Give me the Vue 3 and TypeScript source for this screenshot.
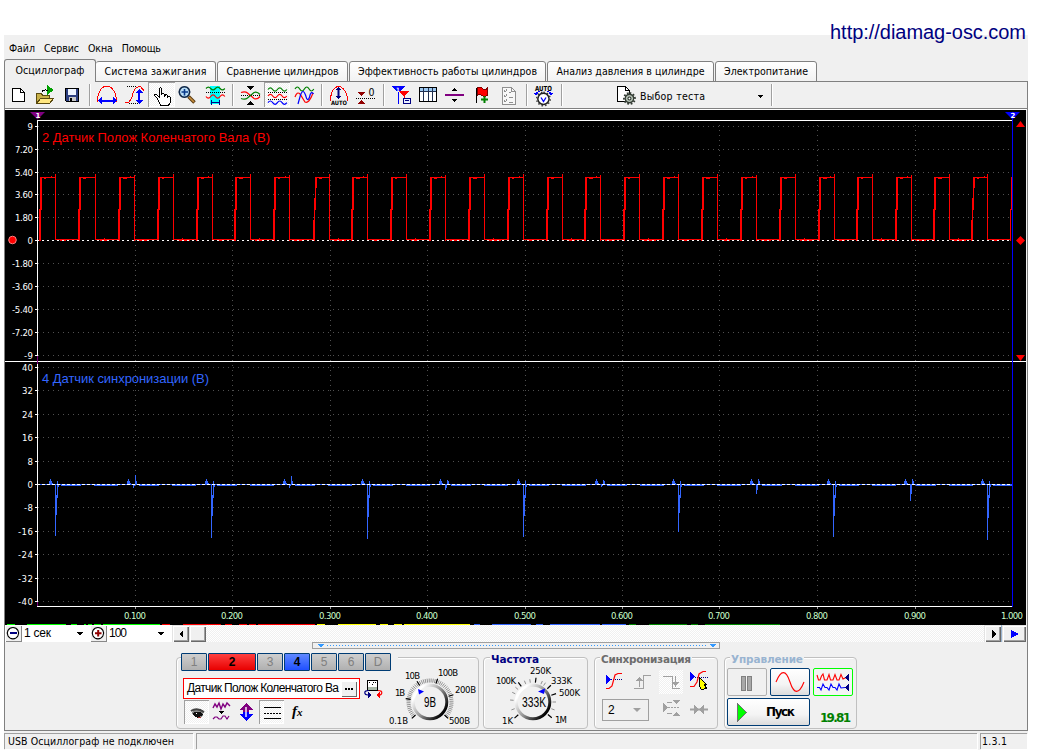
<script setup lang="ts">
import { h, type FunctionalComponent } from 'vue'

type PathShape = { d: string; s?: string; f?: string; w?: number; dash?: string }
type TextShape = { t: string; x: number; y: number; size: number; f?: string; bold?: boolean; len?: number }
type Shape = PathShape | TextShape
type Icon = { box: [number, number, number, number]; shapes: Shape[]; pressed?: boolean }

const p = (d: string, s = 'none', f = 'none', w = 1, dash = ''): PathShape => ({ d, s, f, w, dash })
const t = (text: string, x: number, y: number, size: number, f = '#000', bold = false, len?: number): TextShape =>
  ({ t: text, x, y, size, f, bold, len })

const Glyph: FunctionalComponent<{ icon: Icon }> = ({ icon }) =>
  h('svg', { viewBox: icon.box.join(' '), width: icon.box[2], height: icon.box[3], style: { display: 'block', flex: 'none' } },
    icon.shapes.map((s) => 't' in s
      ? h('text', {
          x: s.x, y: s.y, fill: s.f, 'font-size': s.size, 'font-weight': s.bold ? 700 : 400,
          'font-family': '"DejaVu Sans Condensed", "DejaVu Sans", sans-serif',
          textLength: s.len, lengthAdjust: 'spacingAndGlyphs',
        }, s.t)
      : h('path', {
          d: s.d, stroke: s.s, fill: s.f, 'stroke-width': s.w, 'stroke-dasharray': s.dash || undefined,
          'shape-rendering': s.w && s.w !== 1 ? 'auto' : 'crispEdges',
        })))
Glyph.props = ['icon']

// Spreads the letters so that the label takes the given width.
const vFit = {
  mounted(el: HTMLElement, binding: { value: number }) {
    const n = (el.textContent ?? '').length
    const natural = el.getBoundingClientRect().width
    if (n > 1) el.style.letterSpacing = `${(binding.value - natural) / (n - 1)}px`
  },
}

const wave = (x: number, y: number, half: number, n: number, amp: number, up = true) => {
  let d = `M${x} ${y}`
  for (let i = 0; i < n; i++) d += `q${half / 2} ${(i % 2 === 0) === up ? -amp * 2 : amp * 2} ${half} 0`
  return d
}

const menu = [
  { text: 'Файл', w: 26 },
  { text: 'Сервис', w: 35 },
  { text: 'Окна', w: 25 },
  { text: 'Помощь', w: 39 },
]

const tabs = [
  { text: 'Осциллограф', w: 92, fit: 69 },
  { text: 'Система зажигания', w: 120, fit: 102 },
  { text: 'Сравнение цилиндров', w: 131, fit: 112 },
  { text: 'Эффективность работы цилиндров', w: 197, fit: 179 },
  { text: 'Анализ давления в цилиндре', w: 167, fit: 148 },
  { text: 'Электропитание', w: 102, fit: 84 },
]

const R = '#f00', B = '#00f', G = '#008000', N = '#000080'
const T = (x: number, w: number, shapes: Shape[], pressed = false): Icon => ({ box: [x, 82, w, 26], shapes, pressed })
const sep = (x: number): Shape[] => [p(`M${x + 0.5} 84V106`, '#a0a0a0'), p(`M${x + 1.5} 84V106`, '#fff')]

const tools: Icon[] = [
  T(5, 25, [p('M12.5 88.5H20.5L24.5 92.5V101.5H12.5Z', '#000', '#fff'), p('M20.5 88.5V92.5H24.5', '#000')]),
  T(30, 30, [
    p('M36.5 103.5V93.5H41.5L42.5 95.5H49.5V98.5', '#5a4a10', '#c8b048'),
    p('M36.5 103.5L40.5 98.5H53.5L49.5 103.5Z', '#5a4a10', '#ffe680'),
    p('M47 85L54 90L47 95Z', 'none', '#00a000'), p('M42 91.5Q44 89 48 90.5', '#000'),
  ]),
  T(60, 24, [
    p('M65.5 88.5H78.5V101.5H66.5L65.5 100.5Z', '#000', '#2c3e80'), p('M68 89H76V95H68Z', 'none', '#eef4ff'),
    p('M69 97H76V101H69Z', 'none', '#c8c8c8'), p('M70 98H72V101H70Z', 'none', '#000'),
  ]),
  T(84, 10, sep(89)),
  T(94, 27, [
    p('M97.5 102V98.5C98.5 91 102 86.5 105.5 86.5H108.5C112 87 115.5 92 116.5 98.5V102', R),
    p('M98 100.5L102 96.5V104.5ZM117 100.5L113 96.5V104.5Z', 'none', B), p('M101 101H114', B, 'none', 2),
  ]),
  T(121, 27, [
    p('M124.5 102.5H128.5L131.5 98.5L133.5 91.5L135.5 88.5L138.5 86.5H140.5L144.5 91.5', R),
    p('M127 86.5H136M129 103.5H141', '#000', 'none', 1, '1 1'), p('M139 92V101', B, 'none', 2),
    p('M139 89L143 93H135ZM139 104L143 100H135Z', 'none', B),
  ]),
  T(148, 27, [
    p('M157.5 98.5L154.5 95.5V94.5H156.5L159.5 97.5V88.5Q160.5 86.5 161.5 88.5V94.5Q162.5 92.5 164.5 94.5V96.5Q165.5 93.5 167.5 95.5V97.5Q169.5 95.5 170.5 97.5V102.5L168.5 105H160.5Z', '#000', '#fff'),
  ], true),
  T(175, 27, [
    p('M188.5 96.5L194.5 102.5', '#5a3a10', 'none', 3.6), p('M189 97L194 102', '#c89040', 'none', 1.6),
    p('M184.5 86.8A5.2 5.2 0 1 1 184.4 86.8Z', '#102848', '#b8ddf6', 1.6),
    p('M184.5 89V95.5M181.5 92H188', '#0a3a8a', 'none', 1.6),
  ]),
  T(202, 27, [
    p('M210 86H220V104H210Z', 'none', '#0ff'), p(wave(206, 88.5, 4.7, 4, 1.4), G, 'none', 1.2),
    p('M206 92.5H225', '#000', 'none', 1, '1 1'), p(wave(206, 96.5, 4.7, 4, 1.7, false), R, 'none', 1.2),
    p('M212 102.5H219M211.5 100V105M219.5 100V105', N),
  ]),
  T(229, 10, sep(232)),
  T(239, 25, [
    p('M247 86H254L250.5 90ZM247 105H254L250.5 101Z', 'none', '#000'), p('M241 95.5H260', '#000', 'none', 1, '1 1'),
    p('M241 92.5Q245 91 247.5 93L254 98.5Q257 100 260 96.5', R, 'none', 1.2), p('M241 98.5Q245 100 247.5 98L254 92.5Q257 91 260 94.5', G, 'none', 1.2),
  ]),
  T(264, 26, [
    p(wave(268, 89.5, 4.7, 4, 1.7), G, 'none', 1.2), p('M268 92.5H287', '#000', 'none', 1, '1 1'),
    p(wave(268, 96, 4.7, 4, 1.7), R, 'none', 1.2),
    p('M268 99.5H287', '#000', 'none', 1, '1 1'), p(wave(268, 102.7, 4.7, 4, 1.7), B, 'none', 1.2),
  ], true),
  T(290, 28, [
    p(wave(295, 89, 4.7, 4, 2), G, 'none', 1.2), p('M295 97Q297 91 300 94L305 102Q309 104 313 93', R, 'none', 1.2),
    p('M298 104L300.5 95Q303 88 305.5 95Q307.5 103 309.5 97Q311 90 313.5 94', B, 'none', 1.2),
  ]),
  T(318, 9, sep(321)),
  T(327, 25, [
    p('M330.5 101V97.5Q332.5 86.5 338.5 86.5Q344.5 86.5 347.5 97.5V101', R), p('M338.5 89V97', N, 'none', 2),
    p('M338.5 86.5L341.5 90H335.5ZM338.5 99.5L341.5 96H335.5Z', 'none', N), t('AUTO', 331, 104.5, 6, '#000', true, 16),
  ]),
  T(352, 28, [
    p('M357 92H365L361 96ZM357 104H365L361 100Z', 'none', '#900000'), p('M356 98.5H375', '#000', 'none', 1, '1 1'),
    t('0', 368.5, 96, 10.5),
  ]),
  T(380, 10, sep(383)),
  T(390, 26, [
    p('M392 86H405L398.5 93Z', 'none', B), p('M398.5 92V104', B), p('M399 91H409L404 97Z', 'none', R), p('M404.5 95V100', R),
    t('1', 396, 91.5, 6, '#fff', true), p('M403.5 98.5H410.5V103.5H403.5Z', N, '#e8f0ff'), p('M405 101L407 100L409 101', N),
  ]),
  T(416, 26, [
    p('M419.5 87.5H436.5V101.5H419.5Z', '#000', '#fff'), p('M420 88H436V91.5H420Z', 'none', '#9cc8f0'),
    p('M420 91.5H436M423.5 88V101M428.5 88V101M432.5 88V101', '#203050'),
  ]),
  T(442, 28, [p('M445 95H464', '#800080', 'none', 2), p('M452 91H457L454.5 88ZM452 99H457L454.5 102Z', 'none', '#000', 0)]),
  T(470, 26, [
    p('M476.5 88V103', '#000'), p('M477 88Q480 86 482.5 88.5T487.5 88V95.5Q484.5 97 482 95.5T477 95.5Z', '#800000', R),
    p('M484.5 96V103M481 99.5H488', G, 'none', 2),
  ]),
  T(496, 26, [
    p('M502.5 87.5H511.5L515.5 91.5V104.5H502.5Z', '#909090', '#f8f8f8'), p('M511.5 88V91.5H515', '#909090'),
    p('M504 90.5L505 92L507 89.5M504 95.5L505 97L507 94.5M504 100.5L505 102L507 99.5M509 92.5H511M509 97.5H513M509 102.5H513', '#909090'),
  ]),
  T(522, 9, sep(526)),
  T(531, 27, [
    t('AUTO', 535, 90.5, 7, '#000', true, 17), p('M536 95Q536 91.5 540 91.5M551 95Q551 91.5 547 91.5', B),
    p('M534 93H538L536 96ZM549 93H553L551 96Z', 'none', B), p('M543.5 93.2A5.6 5.6 0 1 1 543.4 93.2Z', '#222', '#fff', 1.5),
    p('M543.5 92.2A6.8 6.8 0 1 1 543.4 92.2Z', '#333', 'none', 1.4, '1.4 2.2'), p('M541 97.5L543.5 101.5L546 97.5', B, 'none', 1.3),
  ]),
  T(558, 50, sep(561)),
  T(608, 31, [
    p('M617.5 86.5H625.5L629.5 90.5V101.5H617.5Z', '#000', '#fff'), p('M625.5 87V90.5H629', '#000'),
    p('M629.5 94.2A4.3 4.3 0 1 1 629.4 94.2Z', '#343c34', '#b8c4b8', 1.4), p('M629.5 93A5.5 5.5 0 1 1 629.4 93Z', '#343c34', 'none', 1.8, '1.8 1.7'),
    p('M629.5 97A1.5 1.5 0 1 1 629.4 97Z', '#343c34', '#fff', 1.1),
  ]),
]
const testArrow: Icon = T(750, 26, [p('M757.5 95H763.5L760.5 98Z', 'none', '#000'), ...sep(771)])

// ---- oscillogram ----
const gridX = [135, 232, 330, 427, 525, 622, 719, 817, 915]
const upper = [
  { y: 126, v: '9' }, { y: 149, v: '7.20' }, { y: 172, v: '5.40' }, { y: 194, v: '3.60' }, { y: 217, v: '1.80' }, { y: 240, v: '0' },
  { y: 263, v: '-1.80' }, { y: 286, v: '-3.60' }, { y: 309, v: '-5.40' }, { y: 332, v: '-7.20' }, { y: 355, v: '-9' },
]
const lower = [
  { y: 367, v: '40' }, { y: 390, v: '32' }, { y: 414, v: '24' }, { y: 437, v: '16' }, { y: 461, v: '8' }, { y: 484, v: '0' },
  { y: 507, v: '-8' }, { y: 531, v: '-16' }, { y: 554, v: '-24' }, { y: 578, v: '-32' }, { y: 601, v: '-40' },
]
const rows = [...upper, ...lower]
const labelLen = (v: string) => ({ 1: 5, 2: v[0] === '-' ? 9 : 11, 3: 15, 4: 18, 5: 21 } as Record<number, number>)[v.length]
const times = [...gridX, 1012].map((x, i) => ({ x, v: i === 9 ? '1.000' : `0.${i + 1}00` }))

const rises = [40, 79, 119, 158, 197, 235, 274, 315, 352, 391, 430, 469, 508, 547, 585, 624, 663, 702, 741, 780, 819, 857, 896, 934, 973]
const box = (x: number, y: number, w: number, hgt: number) => `M${x} ${y}h${w}v${hgt}h${-w}z`
const crank = rises.map((x, i) => {
  const slow = x === 315 || x === 973
  const fall = x + (i === 1 ? 16 : slow ? 14 : 15)
  const next = rises[i + 1] ?? 1011
  const edge = slow
    ? box(x - 2, 220, 1, 21) + box(x - 1, 198, 1, 43) + box(x, 177, 1, 33) + box(x + 1, 177, 1, 11)
    : box(x - 1, 209, 2, 32) + box(x, 177, 2, 33)
  return edge + box(x, 177, fall - x, 1) + box(fall, i % 4 === 2 ? 175 : 174, 1, 66) + box(fall, 239, next - fall, 1)
    + box(x + 4, 178, 2 + (i % 3), 1) + box(fall + 5, 240, 6 + (i % 4) * 2, 1)
    + (i % 2 ? box(fall + 9, 238, 1, 1) : box(x + 11, 176, 1, 1))
}).join('') + box(1010, 209, 1, 32) + box(1011, 177, 1, 33)

const pulses = [
  { x: 55, lo: 536 }, { x: 133, lo: 488, hi: 475 }, { x: 211, lo: 538 }, { x: 289, lo: 488, hi: 476 }, { x: 367, lo: 539 },
  { x: 445, lo: 490, hi: 480 }, { x: 523, lo: 537 }, { x: 601, lo: 487, hi: 480 }, { x: 678, lo: 532 }, { x: 756, lo: 494, hi: 479 },
  { x: 833, lo: 537 }, { x: 910, lo: 501, hi: 479 }, { x: 987, lo: 540 },
]
const cam = box(38, 484, 974, 1) + pulses.map(({ x, lo, hi }) => {
  const span = lo - 484
  const mid = Math.round(span * 0.6)
  const blip = box(x - 6, 481, 1, 3) + box(x - 5, 479, 1, 5) + box(x - 4, 481, 1, 3) + box(x - 3, 483, 1, 1)
  const fall = box(x, 484, 1, span) + (hi
    ? box(x + 1, 484, 1, mid) + box(x + 2, hi, 1, 484 - hi) + box(x + 3, 481, 1, 3)
    : box(x + 1, 495, 1, mid - 11) + box(x + 2, 481, 1, 17) + box(x + 3, 484, 1, 3))
  return blip + fall + box(x + 6, 485, 20, 1) + box(x + 39, 485, x > 980 ? 0 : 24, 1)
}).join('')

const strip = [
  ['#0f0', 7, 15], ['#0f0', 27, 66], ['#0f0', 71, 77], ['#0f0', 84, 86], ['#0f0', 88, 92], ['#0f0', 94, 101], ['#0f0', 103, 160],
  ['#f00', 162, 170], ['#f00', 183, 221], ['#f00', 225, 232], ['#f00', 239, 247], ['#f00', 249, 256], ['#f00', 258, 315],
  ['#ff0', 317, 325], ['#ff0', 338, 376], ['#ff0', 380, 388], ['#ff0', 394, 402], ['#ff0', 404, 470],
  ['#36f', 474, 480], ['#36f', 492, 531], ['#36f', 536, 543], ['#36f', 550, 600], ['#36f', 602, 626],
  ['#080', 629, 636], ['#080', 649, 687], ['#080', 691, 698], ['#080', 705, 780],
] as [string, number, number][]

// ---- controls ----
const minus: Icon = { box: [5, 625, 17, 17], shapes: [p('M13 627.5A5.7 5.7 0 1 1 12.9 627.5Z', '#000', '#fff', 1.1), p('M10 633H17', N, 'none', 2)] }
const plus: Icon = { box: [90, 625, 17, 17], shapes: [p('M98 627.5A5.7 5.7 0 1 1 97.9 627.5Z', '#000', '#fff', 1.1), p('M95 633.2H101.5M98.2 630V636.5', '#900000', 'none', 2)] }
const caret: Icon = { box: [0, 0, 14, 16], shapes: [p('M3 7H10L6.5 10.5Z', 'none', '#000')] }
const arrowL: Icon = { box: [0, 0, 14, 14], shapes: [p('M9 3V11L5 7Z', 'none', '#000')] }
const arrowR: Icon = { box: [0, 0, 14, 14], shapes: [p('M6 3V11L10 7Z', 'none', '#000')] }
const play: Icon = { box: [0, 0, 20, 14], shapes: [p('M7 3V11L15 7Z', 'none', B, 0)] }
const splitter: Icon = {
  box: [313, 643, 405, 5],
  shapes: [p('M317 644H324L320.5 647.5ZM709 644H716L712.5 647.5Z', 'none', '#3399ff', 0), p('M327 645.5H707', '#3399ff', 'none', 1, '1 2')],
}

const channels = [
  { n: '1', c: '' }, { n: '2', c: 'red' }, { n: '3', c: '' }, { n: '4', c: 'blue' }, { n: '5', c: '' }, { n: '6', c: '' }, { n: 'D', c: '' },
]
const probe: Icon = {
  box: [360, 678, 24, 22],
  shapes: [
    p('M367.5 680.5H377.5V690.5H367.5Z', '#000', '#fff'), p('M368 687H377V690H368Z', 'none', '#a8b8a8'),
    p('M369 683L371 682M373 682L376 683M372.5 684V686', '#000', 'none', 1, '1 1'),
    p('M369 690.5Q364.5 690.5 364.8 693Q365 695 368 695', N, 'none', 1.2), p('M367.5 691.5V698.5L371 695Z', 'none', N),
    p('M378 690.5Q382 690.5 381.8 693Q381.6 695 379 695', R, 'none', 1.2), p('M379.5 691.5V698.5L376 695Z', 'none', R),
  ],
}
const eye: Icon = {
  box: [185, 701, 23, 22],
  shapes: [
    p('M191.5 713Q197 706 204 711L203 716Q198 719 194 716Z', 'none', '#888', 0), p('M191 711Q197 707 204 712', '#444', 'none', 2),
    p('M193 713Q198 710 203 714Q198 720 194 716Z', 'none', '#111', 0), p('M196 713H197V714H196Z', 'none', '#fff'), p('M198 717H201', '#b03030'),
  ],
}
const noise: Icon = {
  box: [209, 700, 26, 24],
  shapes: [
    p('M213 708L215 704L217 707L219 703L221 709L223 704L225 707L227 703L230 706', '#800080', 'none', 1.4),
    p('M218 711H224L221 714Z', 'none', '#000'), p('M213 719L215 717H217L219 719H221L223 716H225L227 719L229 716', '#800080', 'none', 1.2),
  ],
}
const updown: Icon = {
  box: [235, 700, 24, 24],
  shapes: [
    p('M246 703L253 710H248.7V712H243.3V710H239Z', 'none', '#800080', 0), p('M246 721L253 714H248.7V712H243.3V714H239Z', 'none', B, 0),
    p('M246 707V717', '#fff', 'none', 1.4),
  ],
}
const lines: Icon = { box: [260, 701, 23, 22], shapes: [p('M264 707.5H281M264 718.5H281', '#000'), p('M264 713.5H281', '#000', 'none', 1, '2 1')] }

type Mark = { text: string; x: number; y: number; len: number }
const dial = (cx: number, major: number[], minor: number[], marks: Mark[], outer: number) => {
  const line = (a: number, r1: number, r2: number) => {
    const c = Math.cos((a * Math.PI) / 180), s = Math.sin((a * Math.PI) / 180)
    return `M${(cx + c * r1).toFixed(1)} ${(702 + s * r1).toFixed(1)}L${(cx + c * r2).toFixed(1)} ${(702 + s * r2).toFixed(1)}`
  }
  return { major: major.map((a) => line(a, 19.5, 24.5)).join(''), minor: minor.map((a) => line(a, 19.5, outer)).join(''), marks }
}
const volt = dial(430, [138, 188, 238, 288, 343, 42], Array.from({ length: 54 }, (_, i) => 138 + i * 5), [
  { text: '0.1В', x: 389, y: 724, len: 19 }, { text: '1В', x: 395, y: 696, len: 10 }, { text: '10В', x: 405, y: 679, len: 15 },
  { text: '100В', x: 438, y: 676, len: 20 }, { text: '200В', x: 455, y: 693, len: 21 }, { text: '500В', x: 449, y: 724, len: 21 },
], 23.5)
const freq = dial(533, [139, 233, 277, 317, 340, 40], [160, 185, 205, 220, 248, 262, 294, 303, 0, 20], [
  { text: '100K', x: 496, y: 684, len: 20 }, { text: '250K', x: 530, y: 674, len: 21 }, { text: '333K', x: 551, y: 684, len: 21 },
  { text: '500K', x: 559, y: 696, len: 21 }, { text: '1M', x: 555, y: 723, len: 12 }, { text: '1K', x: 502, y: 724, len: 11 },
], 23)

const gr = '#a0a0a0'
const syncTop: Icon[] = [
  { box: [600, 670, 30, 24], shapes: [p('M606 675V684L611 679.5Z', 'none', B), p('M611 679.5H622', N, 'none', 1, '1 1'), p('M606 688.5H609L612 686L615 675L618 673.5H622', R, 'none', 1.2)] },
  { box: [630, 670, 29, 24], shapes: [p('M634 688.5H643.5V675.5H651', gr), p('M639.5 677V687', gr), p('M636 681H643L639.5 677Z', 'none', gr)] },
  { box: [659, 670, 24, 24], pressed: true, shapes: [p('M663 676.5H672.5V688.5H680', gr), p('M675.5 676V687', gr), p('M672 682H679L675.5 686Z', 'none', gr)] },
  { box: [683, 670, 32, 24], shapes: [
    p('M690 672V681L695 676.5Z', 'none', B), p('M695 677.5H708', N, 'none', 1, '1 1'), p('M690 686.5H694L697 682L699 674L703 671.5H706', R, 'none', 1.2),
    p('M699.5 677.5L706.5 684.5H704.5L706.5 688.5L701.5 689.5L699.5 686.5Z', '#000', '#ff0') ] },
]
const syncBottom: Icon[] = [
  { box: [655, 697, 30, 26], shapes: [p('M663 703V712L668 707.5Z', 'none', gr), p('M668 707.5H680', gr, 'none', 1, '2 1'), p('M672 700H680L676 704ZM672 716H680L676 712Z', 'none', gr), p('M667 702.5H672M667 713.5H672', gr)] },
  { box: [685, 697, 30, 26], shapes: [p('M690 709.5H708', gr, 'none', 2), p('M694 704.5V714.5L698.8 709.5ZM704 704.5V714.5L699.2 709.5Z', 'none', gr, 0)] },
]
const pause: Icon = { box: [728, 669, 38, 26], shapes: [p('M741.5 676.5H745.5V690.5H741.5ZM747.5 676.5H751.5V690.5H747.5Z', '#808080', '#a8a8a8')] }
const sine: Icon = { box: [771, 669, 38, 26], shapes: [p('M776 682C781 669.5 786 669.5 790 682S799 694.5 804 682', R, 'none', 1.1)] }
const multi: Icon = { box: [814, 669, 38, 26], shapes: [
  p('M817 675L818.5 680L820 680L821.5 676L823 674L824.5 680H827L829 674.5L830.5 680H833L835 674.5L837 680H839L841 674.5L843 679L846 677.5', R, 'none', 1.1),
  p('M817 687.5H819.5L821 690L823 684L825 687.5H827L829 690L831 684L833 687.5H835L837 690L839 684L841 688L845 687.5', B, 'none', 1.1),
  p('M849 674V681L845 677.5ZM849 684V691L845 687.5Z', 'none', N)] }
const go: Icon = { box: [728, 699, 36, 26], shapes: [p('M737.5 703.5V721.5L746.5 712.5Z', '#707070', '#0f0')] }
</script>

<template>
  <div class="screen">
    <header class="banner"><span v-fit="196" class="url">http://diamag-osc.com</span></header>
    <main class="window">
      <nav class="menu">
        <span v-for="m in menu" :key="m.text"><span v-fit="m.w">{{ m.text }}</span></span>
      </nav>
      <div class="tabs">
        <div v-for="(tab, i) in tabs" :key="tab.text" class="tab" :class="[`tab-${i}`, { active: i === 0 }]" :style="{ width: tab.w + 'px' }">
          <span v-fit="tab.fit">{{ tab.text }}</span>
        </div>
      </div>
      <section class="page">
        <div class="toolbar">
          <div v-for="icon in tools" :key="icon.box[0]" class="tool" :class="{ pressed: icon.pressed }"><Glyph :icon="icon" /></div>
          <div class="test"><span v-fit="65">Выбор теста</span></div>
          <Glyph :icon="testArrow" />
        </div>

        <svg class="scope" viewBox="5 110 1021 515" width="1021" height="515">
          <rect x="5" y="110" width="1021" height="515" fill="#000" />
          <g stroke="#505050" stroke-dasharray="1 4">
            <path v-for="r in rows" :key="r.y" :d="`M38 ${r.y + 0.5}H1011`" />
            <path v-for="x in gridX" :key="x" :d="`M${x + 0.5} 125V605`" />
          </g>
          <path d="M37 120.5H1012M37.5 120V607M37 606.5H1012M5 361.5H1026" stroke="#fff" />
          <path v-for="r in rows" :key="r.y" :d="`M35 ${r.y + 0.5}H38`" stroke="#fff" />
          <path v-for="x in gridX" :key="x" :d="`M${x + 0.5} 607V609`" stroke="#999" />
          <path d="M37.5 356V364M37.5 602V606" stroke="#800080" />
          <text v-for="r in rows" :key="r.y" class="axis" :x="33" :y="r.y + 3.5" text-anchor="end" :textLength="labelLen(r.v)">{{ r.v }}</text>
          <text v-for="tm in times" :key="tm.x" class="axis time" :x="tm.x" y="619" text-anchor="middle" textLength="22">{{ tm.v }}</text>
          <path :d="crank" fill="#f00" />
          <path :d="cam" fill="#3366ff" />
          <path d="M37 240.5H1012" stroke="#fff" stroke-dasharray="2 3" />
          <path d="M37 484.5H1012" stroke="#fff" stroke-dasharray="3 2" />
          <text class="trace" x="42" y="142" fill="#f00" textLength="228">2 Датчик Полож Коленчатого Вала (В)</text>
          <text class="trace" x="42" y="383" fill="#3366ff" textLength="167">4 Датчик синхронизации (В)</text>
          <path d="M1012.5 118V607" stroke="#00f" />
          <path d="M30 112H45L37.5 119.5Z" fill="#800080" />
          <path d="M1005 112H1020L1012.5 119.5Z" fill="#00f" />
          <text class="flag" x="35.5" y="118">1</text>
          <text class="flag" x="1010.5" y="118">2</text>
          <path d="M1016 127H1025L1020.5 121ZM1016 355H1025L1020.5 361ZM1020.5 236L1025 240.5L1020.5 245L1016 240.5Z" fill="#f00" />
          <circle cx="12.5" cy="240" r="3.8" fill="#f00" stroke="#ff8080" />
          <path v-for="s in strip" :key="s[1]" :d="`M${s[1]} 624.5H${s[2]}`" :stroke="s[0]" />
        </svg>

        <div class="scroll-row">
          <div class="raised"><Glyph :icon="minus" /></div>
          <div class="combo first"><span v-fit="27">1 сек</span><Glyph :icon="caret" /></div>
          <div class="raised"><Glyph :icon="plus" /></div>
          <div class="combo second"><span v-fit="18">100</span><Glyph :icon="caret" /></div>
          <div class="raised bevel"><Glyph :icon="arrowL" /></div>
          <div class="raised bevel"></div>
          <div class="track"></div>
          <div class="raised bevel"><Glyph :icon="arrowR" /></div>
          <div class="sliver"></div>
          <div class="raised bevel run"><Glyph :icon="play" /></div>
        </div>

        <div class="splitter"><Glyph :icon="splitter" /></div>

        <div class="panels">
          <div class="group g1">
            <div class="channel">
              <div class="channel-tabs">
                <div v-for="c in channels" :key="c.n" class="ch" :class="c.c">{{ c.n }}</div>
              </div>
              <div class="name-row">
                <div class="name"><div class="name-text"><span v-fit="152">Датчик Полож Коленчатого Ва</span></div><div class="more"><i></i><i></i><i></i></div></div>
                <Glyph :icon="probe" />
              </div>
              <div class="modes">
                <div class="pressed mode"><Glyph :icon="eye" /></div>
                <Glyph :icon="noise" />
                <Glyph :icon="updown" />
                <div class="pressed mode"><Glyph :icon="lines" /></div>
                <span class="fx">f<small>x</small></span>
              </div>
            </div>
            <svg class="dial" viewBox="388 658 90 70" width="90" height="70">
              <defs>
                <linearGradient id="rim" x1="0" y1="0.1" x2="1" y2="0.9">
                  <stop offset="0.15" stop-color="#fff" /><stop offset="0.5" stop-color="#999" /><stop offset="0.9" stop-color="#000" />
                </linearGradient>
              </defs>
              <path :d="volt.minor" stroke="#909090" />
              <path :d="volt.major" stroke="#000" stroke-width="1.2" />
              <circle cx="430" cy="702" r="16.8" fill="#f0f0f0" stroke="url(#rim)" stroke-width="3" />
              <path d="M418 689L424 691.5L419 694.5Z" fill="#00f" />
              <text v-for="m in volt.marks" :key="m.text" class="mark" :x="m.x" :y="m.y" :textLength="m.len">{{ m.text }}</text>
              <text class="value" x="424" y="707" textLength="12" lengthAdjust="spacingAndGlyphs">9В</text>
            </svg>
          </div>

          <div class="group g2">
            <span class="legend navy"><span v-fit="48">Частота</span></span>
            <svg class="dial" viewBox="484 658 103 70" width="103" height="70">
              <path :d="freq.minor" stroke="#909090" />
              <path :d="freq.major" stroke="#000" stroke-width="1.2" />
              <circle cx="533" cy="702" r="16.8" fill="#f0f0f0" stroke="url(#rim)" stroke-width="3" />
              <path d="M545 688.5L544 694L538 691.5Z" fill="#00f" />
              <text v-for="m in freq.marks" :key="m.text" class="mark" :x="m.x" :y="m.y" :textLength="m.len">{{ m.text }}</text>
              <text class="value" x="522" y="707" textLength="24" lengthAdjust="spacingAndGlyphs">333K</text>
            </svg>
          </div>

          <div class="group g3">
            <span class="legend gray"><span v-fit="90">Синхронизация</span></span>
            <div class="sync-top">
              <div v-for="s in syncTop" :key="s.box[0]" :class="{ checker: s.pressed }"><Glyph :icon="s" /></div>
            </div>
            <div class="sync-bottom">
              <div class="select"><span>2</span><i class="select-arrow"></i></div>
              <Glyph v-for="s in syncBottom" :key="s.box[0]" :icon="s" />
            </div>
          </div>

          <div class="group g4">
            <span class="legend pale"><span v-fit="72">Управление</span></span>
            <div class="buttons">
              <div class="btn off"><Glyph :icon="pause" /></div>
              <div class="btn"><Glyph :icon="sine" /></div>
              <div class="btn on"><Glyph :icon="multi" /></div>
            </div>
            <div class="buttons">
              <div class="btn start"><Glyph :icon="go" /><span v-fit="29">Пуск</span></div>
              <div class="rate"><span v-fit="31">19.81</span></div>
            </div>
          </div>
        </div>
      </section>
      <footer class="status">
        <div class="cell s1"><span v-fit="166">USB Осциллограф не подключен</span></div>
        <div class="cell s2"></div>
        <div class="cell s3"><span v-fit="25">1.3.1</span></div>
      </footer>
    </main>
  </div>
</template>

<style>
html, body { background: #fff; overflow: hidden; }
</style>

<style scoped>
* { box-sizing: border-box; }
.screen {
  width: 1040px; height: 754px; background: #fff; color: #000; overflow: hidden; white-space: nowrap;
  font: 10.5px/14px "DejaVu Sans Condensed", "DejaVu Sans", sans-serif;
}
.banner { height: 35px; display: flex; justify-content: flex-end; padding: 20px 14px 0 0; }
.url { position: relative; color: #000080; font: 20px/24px "Liberation Sans", Arial, sans-serif; align-self: flex-start; }
.window { width: 1024px; height: 715px; margin-left: 4px; background: #f0f0f0; }
.menu { height: 24px; display: flex; gap: 9px; padding: 6px 0 0 5px; }
.tabs {
  height: 23px; display: flex; align-items: flex-end; gap: 1px;
  background: linear-gradient(#808080, #808080) 0 100% / 100% 1px no-repeat;
}
.tab {
  height: 21px; border: 1px solid #808080; border-radius: 3px 3px 0 0; display: flex; justify-content: center;
  padding-top: 2px; background: linear-gradient(#fff, #f2f2f2);
}
.tab.active { height: 23px; border-bottom: 0; background: #f0f0f0; margin-right: -1px; padding-top: 3px; }
.tab-1 { border-left: 0; }
.page { width: 1024px; height: 649px; border: 1px solid #808080; border-top: 0; }
.toolbar { height: 28px; display: flex; border-bottom: 1px solid #fff; box-shadow: inset 0 -1px #808080; }
.tool { height: 26px; flex: none; }
.tool.pressed { height: 25px; overflow: hidden; }
.pressed, .checker, .track { background: repeating-conic-gradient(#fff 0 25%, #f0f0f0 0 50%) 0 0 / 2px 2px; }
.pressed { box-shadow: inset 1px 1px #a0a0a0, inset -1px -1px #fff; }
.test { width: 111px; padding: 7px 0 0 1px; }
.scope { display: block; }
.axis { font: 9.5px "DejaVu Sans Condensed", "DejaVu Sans", sans-serif; fill: #fff; }
.time { fill: #ccffcc; }
.trace { font: 13px "Liberation Sans", Arial, sans-serif; }
.flag { font: bold 7px "DejaVu Sans", sans-serif; fill: #fff; }

.scroll-row { height: 17px; display: flex; background: #fff; width: 1021px; }
.raised { width: 17px; height: 17px; background: #f0f0f0; box-shadow: inset 1px 1px #fff, inset -1px -1px #888; flex: none; }
.combo { display: flex; justify-content: space-between; font: 12px/16px "Liberation Sans", Arial, sans-serif; }
.first { width: 68px; padding: 0 3px 0 2px; }
.second { width: 65px; padding: 0 4px 0 2px; }
.bevel { display: flex; align-items: center; justify-content: center; box-shadow: inset 1px 1px #e3e3e3, inset 2px 2px #fff, inset -1px -1px #696969, inset -2px -2px #a0a0a0; }
.track { flex: 1; }
.sliver { width: 1px; background: #99b4d1; }
.run { width: 24px; }
.splitter { width: 408px; height: 7px; margin-left: 307px; border: 1px solid #a0a0a0; }

.panels { display: flex; padding: 8px 0 0 171px; }
.group { position: relative; height: 72px; border: 1px solid #c0c0c0; border-radius: 4px; box-shadow: inset 1px 1px #fff; display: flex; }
.g1 { width: 303px; margin-right: 4px; }
.g2 { width: 105px; margin-right: 6px; }
.g3 { width: 124px; margin-right: 6px; flex-direction: column; }
.g4 { width: 133px; flex-direction: column; }
.legend { position: absolute; left: 6px; top: -6px; background: #f0f0f0; font: bold 10.5px/14px "DejaVu Sans", sans-serif; padding: 0 1px; }
.navy { color: #000080; }
.gray { color: #6d6d6d; left: 5px; }
.pale { color: #99b4d1; left: 5px; }
.channel { width: 211px; flex: none; }
.channel-tabs { display: flex; gap: 1px; margin: -5px 0 0 4px; width: 217px; height: 18px; background: #f0f0f0; }
.ch {
  width: 26px; height: 18px; border: 1px solid #003c74; border-radius: 1px; background: linear-gradient(#cfcfcf, #b0b0b0);
  color: #808080; text-align: center; font: 12px/17px "Liberation Sans", Arial, sans-serif;
}
.red { width: 48px; background: linear-gradient(#ff4040, #e80000); color: #000; font-weight: bold; }
.blue { background: linear-gradient(#6088ff, #2050ff); color: #000; font-weight: bold; }
.name-row { display: flex; margin: 7px 0 0 6px; height: 22px; }
.name { width: 177px; height: 21px; border: 1px solid #f00; background: #fff; display: flex; padding: 2px; flex: none; }
.name-text { width: 155px; padding-left: 1px; font: 12px/15px "Liberation Sans", Arial, sans-serif; }
.more {
  width: 16px; height: 16px; background: #f0f0f0; display: flex; justify-content: center; align-items: center; gap: 1px; flex: none;
  box-shadow: inset 1px 1px #fff, inset -1px -1px #696969;
}
.more i { width: 2px; height: 2px; background: #000; }
.modes { display: flex; margin-left: 7px; height: 24px; }
.mode { width: 25px; height: 24px; padding: 1px; }
.fx { font: italic bold 15px/22px "Liberation Serif", serif; margin-left: 8px; }
.fx small { font-size: 11px; }
.dial { display: block; flex: none; position: relative; }
.mark { font: 9.5px "DejaVu Sans Condensed", "DejaVu Sans", sans-serif; }
.value { font: 14px "Liberation Sans", Arial, sans-serif; }
.sync-top { display: flex; margin: 12px 0 0 5px; }
.sync-bottom { display: flex; margin: 3px 0 0 7px; }
.select {
  width: 47px; height: 22px; margin: 2px 6px 0 0; border: 1px solid #a0a0a0; display: flex; align-items: center;
  justify-content: space-between; padding: 0 7px 1px 5px; font: 12px/18px "Liberation Sans", Arial, sans-serif; flex: none;
}
.select-arrow { border: 4px solid transparent; border-top-color: #a0a0a0; border-bottom: 0; }
.buttons { display: flex; gap: 3px; margin: 2px 0 0 2px; }
.legend + .buttons { margin-top: 10px; }
.btn { width: 40px; height: 28px; border: 1px solid #003c74; border-radius: 2px; background: linear-gradient(#fff, #f4f4f4 60%, #dcdcdc); flex: none; }
.off { border-color: #b0b0b0; background: #f0f0f0; }
.on { border-color: #0f0; background: #f4f4f4; }
.start { width: 83px; display: flex; font: bold 12px/26px "DejaVu Sans", sans-serif; gap: 2px; }
.rate { color: #008000; font: bold 12px/14px "DejaVu Sans", sans-serif; padding: 13px 0 0 7px; }

.status { height: 19px; padding-top: 2px; display: flex; gap: 3px; }
.cell { height: 16px; border: solid #a0a0a0; border-width: 1px 0 0 1px; box-shadow: 1px 1px #fff; padding: 0 0 0 3px; }
.s1 { width: 189px; }
.s2 { width: 781px; }
.s3 { width: 47px; padding-left: 1px; }
</style>
